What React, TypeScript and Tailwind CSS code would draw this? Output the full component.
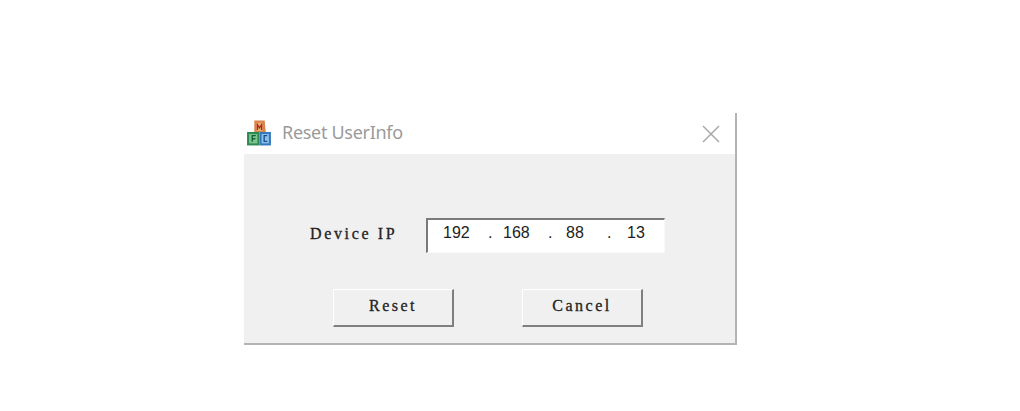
export default function App() {
  return (
    <div className="w-[1020px] h-[411px] bg-white overflow-hidden pt-[113px] pl-[244px]">
      <div className="w-[493px] h-[232px] flex flex-col border-r-2 border-b-2 border-[#b4b4b4] bg-white">
        <div className="h-[41px] shrink-0 flex items-center">
          <svg width="27" height="28" viewBox="0 0 26 26" className="ml-[2px] -mt-[2px]">
            <path d="M8 1 L18 1 L19 12 L8 12 Z" fill="#d9854a" />
            <rect x="10" y="3" width="6" height="8" fill="#e8b070" />
            <path d="M11 10 V5 L13 8 L15 5 V10" stroke="#b3261e" strokeWidth="1.3" fill="none" />
            <rect x="1" y="12" width="12" height="13" fill="#2f8a52" />
            <rect x="3" y="14" width="8" height="9" fill="#7cc58f" />
            <path d="M6 21.5 V15.5 H9.5 M6 18.5 H9" stroke="#14603a" strokeWidth="1.3" fill="none" />
            <rect x="13" y="12" width="11" height="13" fill="#3579bd" />
            <rect x="15" y="14" width="7" height="9" fill="#8cc0ea" />
            <path d="M20.5 15.5 H17.5 V21 H20.5" stroke="#1c4f8c" strokeWidth="1.3" fill="none" />
          </svg>
          <span className="ml-[9px] -mt-[3px] text-[18px] leading-none text-[#9a9a9a] font-['Noto_Sans',sans-serif] tracking-[-0.3px]">
            Reset UserInfo
          </span>
          <svg width="18" height="18" viewBox="0 0 18 18" className="ml-auto mr-[15px]">
            <path d="M1 1 L17 17 M17 1 L1 17" stroke="#a8a8a8" strokeWidth="1.5" fill="none" />
          </svg>
        </div>
        <div className="flex-1 bg-[#f0f0f0] flex flex-col">
          <div className="flex items-center mt-[64px] ml-[66px]">
            <span className="w-[116px] text-[16px] leading-none text-[#222] font-['Liberation_Serif',serif] tracking-[2.65px] -mt-[4px] [-webkit-text-stroke:0.3px_#222]">
              Device IP
            </span>
            <div className="w-[239px] h-[35px] flex items-center bg-white border-l-2 border-t-2 border-r border-b border-l-[#7a7a7a] border-t-[#7a7a7a] border-r-[#fafafa] border-b-[#fafafa] text-[16px] text-[#222] font-['Liberation_Sans',sans-serif] leading-none">
              <div className="flex items-center -mt-[6px] pl-[15px]">
                <span className="w-[45px]">192</span>
                <span className="w-[15px]">.</span>
                <span className="w-[45px]">168</span>
                <span className="w-[18px]">.</span>
                <span className="w-[41px]">88</span>
                <span className="w-[20px]">.</span>
                <span>13</span>
              </div>
            </div>
          </div>
          <div className="flex mt-[36px] ml-[89px] gap-[68px]">
            <Btn label="Reset" />
            <Btn label="Cancel" />
          </div>
        </div>
      </div>
    </div>
  );
}

function Btn({ label }: { label: string }) {
  return (
    <div className="w-[121px] h-[38px] flex items-center justify-center bg-[#f0f0f0] border-l border-t border-r-2 border-b-2 border-l-white border-t-white border-r-[#7f7f7f] border-b-[#7f7f7f] text-[16px] tracking-[2.5px] leading-none text-[#222] font-['Liberation_Serif',serif] [-webkit-text-stroke:0.3px_#222]">
      <span className="-mt-[4px]">{label}</span>
    </div>
  );
}
